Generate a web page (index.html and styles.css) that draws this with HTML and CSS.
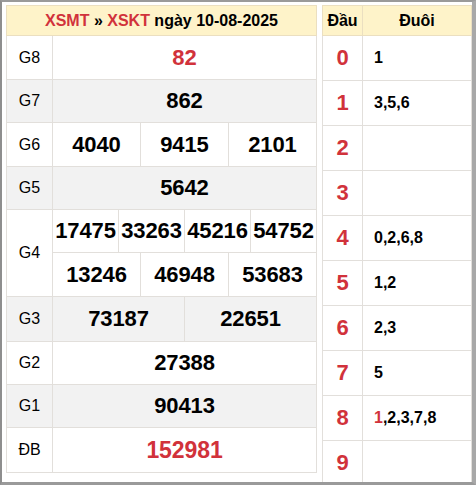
FILE: index.html
```html
<!DOCTYPE html>
<html lang="vi">
<head>
<meta charset="utf-8">
<link rel="stylesheet" href="styles.css">
</head>
<body>
<div class="frame">
  <table class="kq">
    <colgroup>
      <col class="c-label">
      <col><col><col><col><col><col><col><col><col><col><col><col>
    </colgroup>
    <tr class="head"><th colspan="13"><span class="red">XSMT</span> » <span class="red">XSKT</span> ngày 10-08-2025</th></tr>
    <tr class="r44"><td class="lbl">G8</td><td colspan="12" class="num red">82</td></tr>
    <tr class="r43 alt"><td class="lbl">G7</td><td colspan="12" class="num">862</td></tr>
    <tr class="r44"><td class="lbl">G6</td><td colspan="4" class="num">4040</td><td colspan="4" class="num">9415</td><td colspan="4" class="num">2101</td></tr>
    <tr class="r43 alt"><td class="lbl">G5</td><td colspan="12" class="num">5642</td></tr>
    <tr class="r43"><td class="lbl" rowspan="2">G4</td><td colspan="3" class="num">17475</td><td colspan="3" class="num">33263</td><td colspan="3" class="num">45216</td><td colspan="3" class="num">54752</td></tr>
    <tr class="r44"><td colspan="4" class="num">13246</td><td colspan="4" class="num">46948</td><td colspan="4" class="num">53683</td></tr>
    <tr class="r45 alt"><td class="lbl">G3</td><td colspan="6" class="num">73187</td><td colspan="6" class="num">22651</td></tr>
    <tr class="r43"><td class="lbl">G2</td><td colspan="12" class="num">27388</td></tr>
    <tr class="r43 alt"><td class="lbl">G1</td><td colspan="12" class="num">90413</td></tr>
    <tr class="r45"><td class="lbl">ĐB</td><td colspan="12" class="num red big">152981</td></tr>
  </table>
  <table class="dd">
    <tr class="head"><th class="c-dau">Đầu</th><th>Đuôi</th></tr>
    <tr><td class="dau">0</td><td class="duoi">1</td></tr>
    <tr><td class="dau">1</td><td class="duoi">3,5,6</td></tr>
    <tr><td class="dau">2</td><td class="duoi"></td></tr>
    <tr><td class="dau">3</td><td class="duoi"></td></tr>
    <tr><td class="dau">4</td><td class="duoi">0,2,6,8</td></tr>
    <tr><td class="dau">5</td><td class="duoi">1,2</td></tr>
    <tr><td class="dau">6</td><td class="duoi">2,3</td></tr>
    <tr><td class="dau">7</td><td class="duoi">5</td></tr>
    <tr><td class="dau">8</td><td class="duoi"><span class="red">1</span>,2,3,7,8</td></tr>
    <tr><td class="dau">9</td><td class="duoi"></td></tr>
  </table>
</div>
</body>
</html>
```

FILE: styles.css
```css
html, body {
  margin: 0;
  padding: 0;
  background: #fff;
}
body {
  font-family: "Liberation Sans", Arial, sans-serif;
  color: #000;
}
.frame {
  box-sizing: border-box;
  width: 476px;
  height: 485px;
  border-style: solid;
  border-color: #9a9a9a #a8a8a8 #9a9a9a #8e8e8e;
  border-width: 2px 4px 3px 2px;
  padding: 3px 0 0 4px;
  display: flex;
  align-items: flex-start;
  gap: 5px;
  overflow: hidden;
  background: #fff;
}
table {
  border-collapse: collapse;
  table-layout: fixed;
}
td, th {
  border: 1px solid #e2dfdb;
  padding: 0;
  text-align: center;
}
.red { color: #d1323b; }
.head th {
  background: #fef3c9;
  border-color: #ebdfc0;
  height: 29px;
  font-size: 16px;
  font-weight: bold;
}
.kq {
  width: 311px;
  flex: none;
}
.c-label { width: 46px; }
.lbl {
  font-size: 16px;
}
.num {
  font-size: 22px;
  font-weight: bold;
  white-space: nowrap;
  overflow: hidden;
  letter-spacing: -0.1px;
}
.num.big { font-size: 23px; }
.alt td { background: #f2f2f2; }
.r43 { height: 43px; }
.r44 { height: 44px; }
.r45 { height: 45px; }
.dd {
  width: 150px;
  flex: none;
}
.c-dau { width: 39px; }
.dd td { height: 44px; }
.dau {
  color: #d1323b;
  font-size: 22px;
  font-weight: bold;
}
.duoi {
  text-align: left;
  padding-left: 11px;
  font-size: 16px;
  font-weight: bold;
}
```
